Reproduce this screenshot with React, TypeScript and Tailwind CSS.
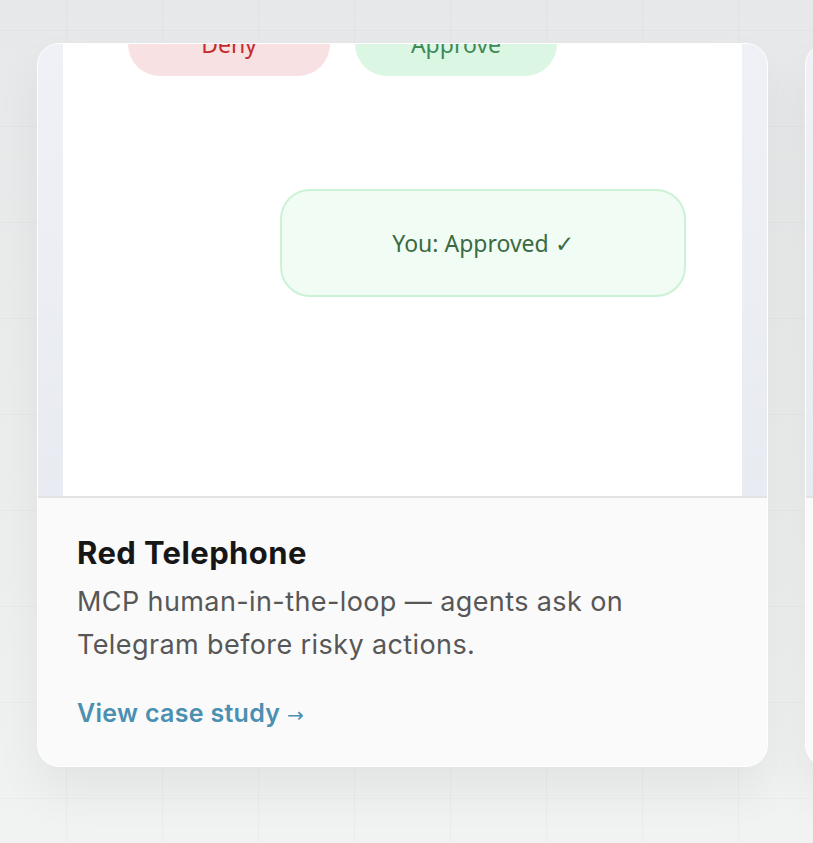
import React from 'react';

const sans = { fontFamily: 'Inter, "Noto Sans", sans-serif' };

const ChatPreview: React.FC = () => (
  <div className="h-[454px] shrink-0 overflow-hidden border-b-2 border-[#e3e3e3] bg-[linear-gradient(180deg,#eff1f6,#e8ebf1)] px-[25px]">
    <div className="flex h-full flex-col bg-white font-['Noto_Sans',sans-serif]">
      <div className="-mt-[32px] flex gap-[25px] pl-[65px]">
        <div className="flex h-[64px] w-[202px] items-center justify-center rounded-full bg-[#f7e1e2] text-[23px] text-[#c62a2a]">
          Deny
        </div>
        <div className="flex h-[64px] w-[202px] items-center justify-center rounded-full bg-[#dbf7e4] text-[23px] text-[#3f8a57]">
          Approve
        </div>
      </div>
      <div className="mt-[113px] flex justify-end pr-[56px]">
        <div className="flex h-[108px] w-[406px] items-center justify-center rounded-[30px] border-2 border-[#ccf2d5] bg-[#f1fcf4] text-[23px] text-[#3b6a42]">
          You: Approved ✓
        </div>
      </div>
    </div>
  </div>
);

const ProjectCard: React.FC = () => (
  <div className="flex h-[724px] w-[731px] shrink-0 flex-col overflow-hidden rounded-[22px] border border-white bg-[#fafafa] shadow-[0_24px_48px_rgba(0,0,0,0.06)]">
    <ChatPreview />
    <div className="px-[39px] pt-[37px]" style={sans}>
      <h3 className="text-[31px] font-bold leading-[36px] tracking-[0.4px] text-[#161616]">Red Telephone</h3>
      <p className="mt-[9px] text-[27px] leading-[43px] tracking-[0.4px] text-[#575757]">
        MCP human-in-the-loop — agents ask on
        <br />
        Telegram before risky actions.
      </p>
      <a className="mt-[31px] block text-[25px] font-semibold leading-[32px] tracking-[0.3px] text-[#4b8fb1]">
        View case study <span className="font-['DejaVu_Sans',sans-serif] text-[20px] font-normal">→</span>
      </a>
    </div>
  </div>
);

export default function App() {
  return (
    <div className="relative h-[843px] w-[813px] overflow-hidden bg-[linear-gradient(180deg,#e7e8e9,#eceded_60%,#f1f2f2)]">
      <div className="absolute inset-0 bg-[linear-gradient(to_right,rgba(0,0,0,0.025)_1px,transparent_1px),linear-gradient(to_bottom,rgba(0,0,0,0.02)_1px,transparent_1px)] bg-[size:96px_96px] bg-[position:66px_30px]" />
      <div className="relative flex gap-[37px] pl-[37px] pt-[43px]">
        <ProjectCard />
        <ProjectCard />
      </div>
    </div>
  );
}
